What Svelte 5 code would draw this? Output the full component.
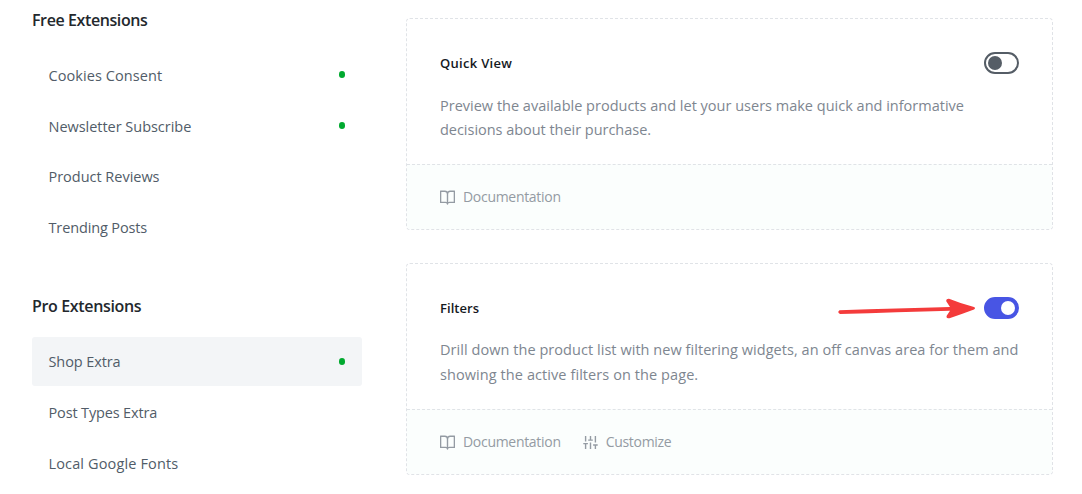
<script>
  const groups = [
    {
      title: 'Free Extensions',
      tracking: -0.4,
      items: [
        { label: 'Cookies Consent', tracking: 0.08, on: true },
        { label: 'Newsletter Subscribe', tracking: -0.03, on: true },
        { label: 'Product Reviews', tracking: -0.02 },
        { label: 'Trending Posts', tracking: -0.13 }
      ]
    },
    {
      title: 'Pro Extensions',
      tracking: -0.35,
      items: [
        { label: 'Shop Extra', tracking: -0.1, on: true, active: true },
        { label: 'Post Types Extra', tracking: -0.15 },
        { label: 'Local Google Fonts', tracking: 0.14 }
      ]
    }
  ];
  const cards = [
    {
      title: 'Quick View',
      tracking: 0.3,
      lines: [
        { text: 'Preview the available products and let your users make quick and informative', tracking: 0.005 },
        { text: 'decisions about their purchase.', tracking: -0.03 }
      ],
      enabled: false
    },
    {
      title: 'Filters',
      tracking: 0.05,
      lines: [
        { text: 'Drill down the product list with new filtering widgets, an off canvas area for them and', tracking: 0.05 },
        { text: 'showing the active filters on the page.', tracking: 0.08 }
      ],
      enabled: true
    }
  ];
</script>

<div class="page">
  <nav>
    {#each groups as group}
      <section>
        <h2 style:letter-spacing="{group.tracking}px">{group.title}</h2>
        <ul>
          {#each group.items as item}
            <li class:active={item.active}>
              <span style:letter-spacing="{item.tracking}px">{item.label}</span>
              {#if item.on}<i class="dot"></i>{/if}
            </li>
          {/each}
        </ul>
      </section>
    {/each}
  </nav>

  <main>
    {#each cards as card}
      <article>
        <div class="body">
          <header>
            <h3 style:letter-spacing="{card.tracking}px">{card.title}</h3>
            <div class="switch" class:enabled={card.enabled}><i></i></div>
          </header>
          <p class:enabled={card.enabled}>
            {#each card.lines as line}<span style:letter-spacing="{line.tracking}px">{line.text}</span>{/each}
          </p>
        </div>
        <footer>
          <div class="link doc">
            <svg width="15" height="15" viewBox="0 0 15 15" fill="none" stroke="currentColor" stroke-width="1.4" stroke-linejoin="round">
              <path d="M.6 1.3h4.2Q7.5 1.3 7.5 4Q7.5 1.3 10.2 1.3h4.2v11.1H9.6Q7.5 12.4 7.5 14Q7.5 12.4 5.4 12.4H.6zM7.5 4v9.8" />
            </svg>
            <span>Documentation</span>
          </div>
          {#if card.enabled}
            <div class="link customize">
              <svg width="15" height="15" viewBox="0 0 15 15" fill="none" stroke="currentColor" stroke-width="1.4">
                <path d="M2.6 1v5.5M.3 8.6h4.6M2.6 8.6V14M7.5 1v4.1M5.2 5.1h4.6M7.5 7.6V14M12.4 1v6.5M10.1 10h4.6M12.4 10v4" />
              </svg>
              <span>Customize</span>
            </div>
          {/if}
        </footer>
        {#if card.enabled}
          <svg class="arrow" width="140" height="28" viewBox="0 0 140 28">
            <path d="M1.5 12.2 Q60 10.2 112 9 L108.4 3.5 Q107.5 .5 111 .7 Q123 5.5 136 9.1 Q138 10.3 136 11.4 Q123 16.2 111.5 20.3 Q107.3 20.3 109 17.3 L112 12.7 Q60 14.2 2 16 Q-1.2 14.3 1.5 12.2Z" fill="#f43b3b" />
          </svg>
        {/if}
      </article>
    {/each}
  </main>
</div>

<style>
  :global(body) { background: #fff; overflow: hidden; }
  * { box-sizing: border-box; }
  .page {
    display: grid;
    grid-template-columns: 330px 647px;
    column-gap: 44px;
    padding-left: 32px;
    height: 494px;
    overflow: hidden;
    font-family: "Segoe UI", "Open Sans", "Noto Sans", sans-serif;
  }
  nav { padding-top: 8px; }
  section { margin-bottom: 42px; }
  h2 {
    margin: 0 0 19px;
    font-size: 16px;
    line-height: 24px;
    font-weight: 600;
    color: #23282d;
  }
  ul { list-style: none; margin: 0; padding: 0; display: flex; flex-direction: column; gap: 1.7px; }
  section + section ul { gap: 1.9px; }
  li {
    height: 49px;
    padding: 0 16.6px 0 16.5px;
    display: flex;
    align-items: center;
    justify-content: space-between;
    border-radius: 3px;
    font-size: 14.5px;
    color: #515c68;
  }
  li.active { background: #f3f5f7; }
  .dot { width: 6.6px; height: 7px; margin-bottom: 2px; border-radius: 50%; background: #00a92f; }
  .active .dot { margin-bottom: 0; }
  main { padding-top: 18px; display: flex; flex-direction: column; gap: 33px; }
  article {
    position: relative;
    height: 212px;
    border: 1px dashed #e0e3e7;
    border-radius: 4px;
    overflow: hidden;
    display: flex;
    flex-direction: column;
  }
  .body { height: 145px; padding: 33px 33px 0; }
  header { display: flex; align-items: center; justify-content: space-between; height: 22px; }
  h3 { margin: 0; font-size: 13px; font-weight: 600; color: #15191e; }
  .switch {
    width: 35px;
    height: 22px;
    border: 2px solid #555d66;
    border-radius: 11px;
    padding: 2px;
    display: flex;
    align-items: center;
  }
  .switch i { width: 14px; height: 14px; border-radius: 50%; background: #555d66; }
  .switch.enabled { justify-content: flex-end; background: #4855e4; border-color: #4855e4; }
  .switch.enabled i { background: #fff; }
  p { margin: 19.5px 0 0; font-size: 14.5px; line-height: 24.4px; color: #7e8690; }
  p.enabled { margin-top: 19px; line-height: 24.5px; }
  p span { display: block; white-space: nowrap; }
  footer {
    flex: 1;
    border-top: 1px dashed #e0e3e7;
    background: #fbfefd;
    padding: 0 33px;
    display: flex;
    align-items: center;
    gap: 22px;
    color: #949ba3;
    font-size: 14px;
  }
  .link { display: flex; align-items: center; gap: 8px; }
  .link span { letter-spacing: -0.3px; margin-top: -2px; }
  .arrow { position: absolute; left: 431px; top: 34px; }
</style>
